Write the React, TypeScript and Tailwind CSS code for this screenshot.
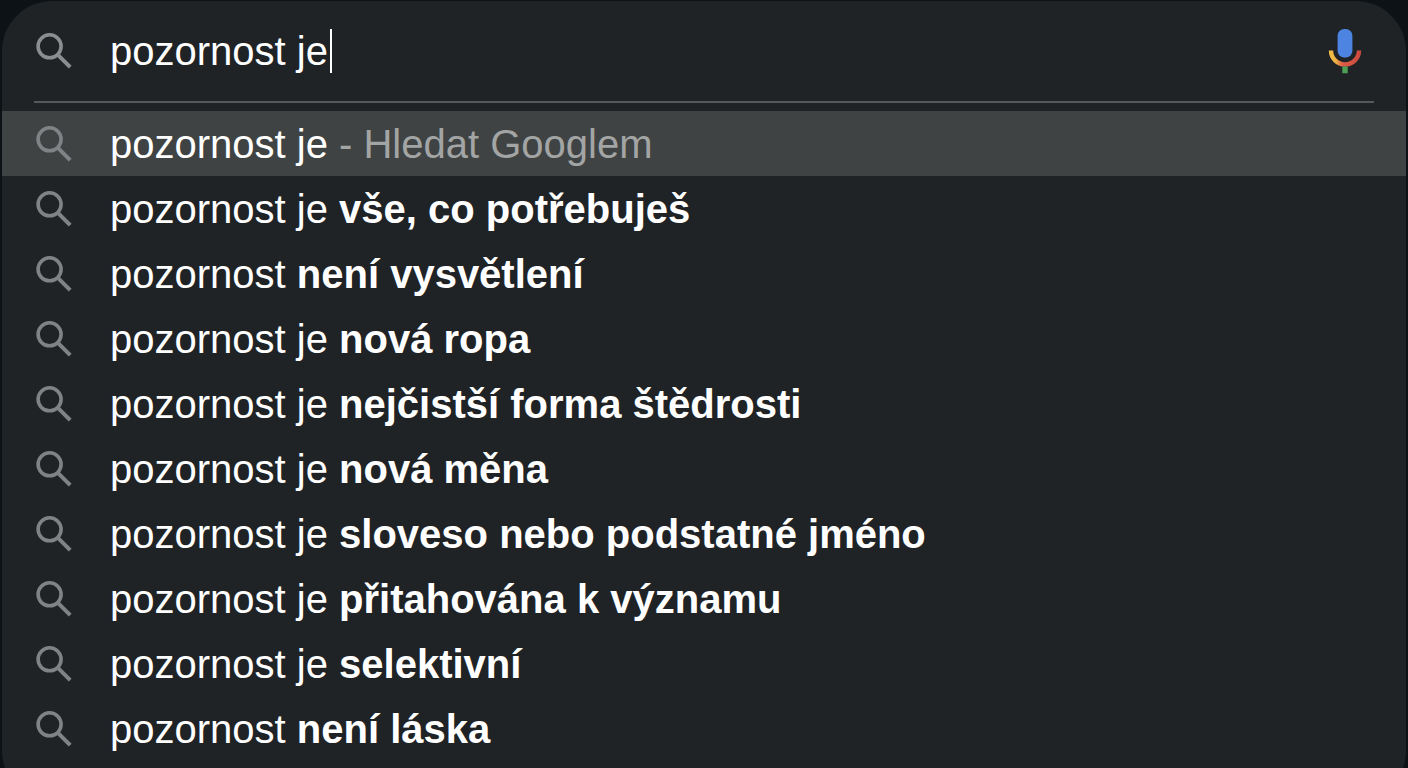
import { useState } from 'react';

type Suggestion = { typed: string; completion?: string; hint?: string };

const suggestions: Suggestion[] = [
  { typed: 'pozornost je', hint: '- Hledat Googlem' },
  { typed: 'pozornost je', completion: 'vše, co potřebuješ' },
  { typed: 'pozornost', completion: 'není vysvětlení' },
  { typed: 'pozornost je', completion: 'nová ropa' },
  { typed: 'pozornost je', completion: 'nejčistší forma štědrosti' },
  { typed: 'pozornost je', completion: 'nová měna' },
  { typed: 'pozornost je', completion: 'sloveso nebo podstatné jméno' },
  { typed: 'pozornost je', completion: 'přitahována k významu' },
  { typed: 'pozornost je', completion: 'selektivní' },
  { typed: 'pozornost', completion: 'není láska' },
];

function SearchIcon() {
  return (
    <svg viewBox="0 0 36 36" className="size-9 shrink-0" fill="none" stroke="currentColor" aria-hidden="true">
      <circle cx="13.6" cy="13.3" r="11.5" strokeWidth="3.6" />
      <path d="M22.4 22.4 34.2 34.2" strokeWidth="4" />
    </svg>
  );
}

function MicIcon() {
  return (
    <svg viewBox="0 0 34 46" className="h-[46px] w-[34px]" fill="none" aria-hidden="true">
      <defs>
        <linearGradient id="mic-arc" gradientUnits="userSpaceOnUse" x1="1" y1="0" x2="33" y2="0">
          <stop offset="0" stopColor="#f0bf45" />
          <stop offset="0.22" stopColor="#ecb045" />
          <stop offset="0.42" stopColor="#dd5c48" />
          <stop offset="1" stopColor="#cb4a3e" />
        </linearGradient>
      </defs>
      <path d="M3 22.5a14 14 0 0 0 28 0" stroke="url(#mic-arc)" strokeWidth="4.4" />
      <rect x="9.6" y="1" width="14.8" height="28.4" rx="6.5" fill="#4d84e2" />
      <path d="M17 38.6v6.6" stroke="#4ea054" strokeWidth="5.4" />
    </svg>
  );
}

export default function App() {
  const [query, setQuery] = useState('pozornost je');

  return (
    <div className="h-screen overflow-hidden bg-[#0d1216] px-0.5 pt-px font-['Liberation_Sans',Arial,sans-serif] text-[40px] leading-[63px] text-white">
      <main className="overflow-hidden rounded-[50px] bg-[#1f2326] pb-10">
        <form role="search" onSubmit={(e) => e.preventDefault()}>
          <div className="mx-8 flex h-[102px] items-center gap-[38px] border-b-2 border-[#55585b] pl-0.5">
            <label htmlFor="query" className="text-[#8b8e90]">
              <SearchIcon />
            </label>
            <div className="flex min-w-0 flex-1 items-center gap-0.5">
              <input
                id="query"
                type="text"
                aria-label="Hledat"
                autoComplete="off"
                value={query}
                onChange={(e) => setQuery(e.target.value)}
                className="field-sizing-content bg-transparent caret-transparent outline-none"
              />
              <span className="h-11 w-0.5 bg-white" aria-hidden="true" />
            </div>
            <button type="button" aria-label="Hlasové vyhledávání" className="mr-3">
              <MicIcon />
            </button>
          </div>
        </form>
        <ul className="pt-2">
          {suggestions.map((item, index) => (
            <li key={index}>
              <button
                type="button"
                className={`flex w-full items-center gap-[38px] px-[34px] text-left ${index === 0 ? 'bg-[#404343]' : ''}`}
              >
                <span className="text-[#808385]">
                  <SearchIcon />
                </span>
                <span className="min-w-0 pt-0.5">
                  {item.typed}{' '}
                  {item.completion && <b>{item.completion}</b>}
                  {item.hint && <span className="text-[#a3a5a5]">{item.hint}</span>}
                </span>
              </button>
            </li>
          ))}
        </ul>
      </main>
    </div>
  );
}
